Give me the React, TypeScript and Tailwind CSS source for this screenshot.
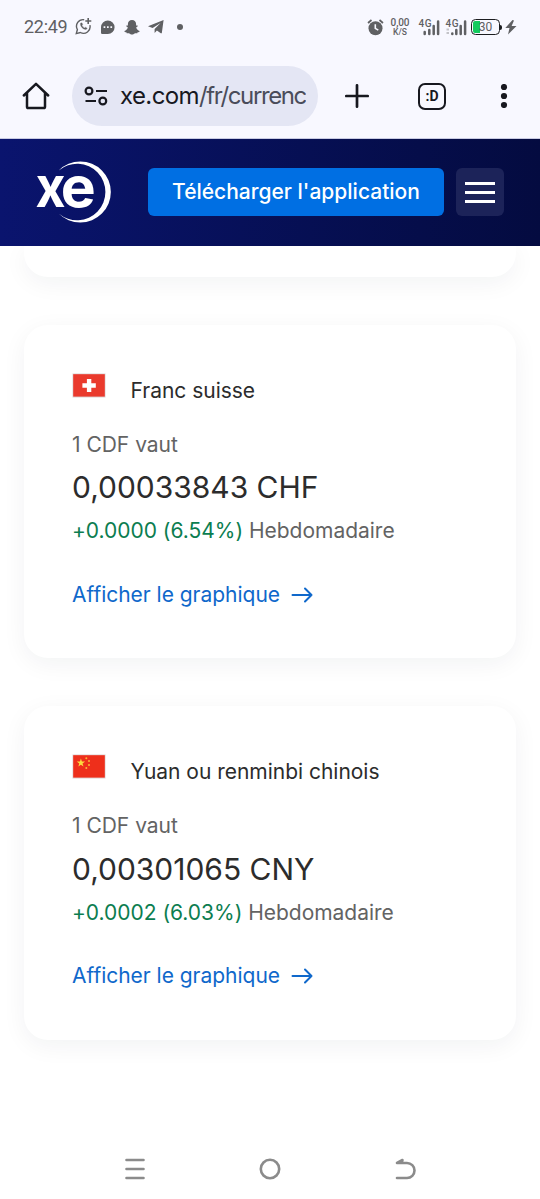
import type { ReactNode } from "react";

type CurrencyCardProps = {
  flag: ReactNode;
  name: string;
  amount: string;
  change: string;
};

function SwissFlag() {
  return (
    <svg width="34" height="25" viewBox="0 0 34 25" className="block">
      <rect x="0.5" y="0.5" width="33" height="24" fill="#d9d4d4" />
      <rect x="1.2" y="1.2" width="31.6" height="22.4" fill="#ea3a2d" />
      <path d="M14.9 6h4.4v4.3h4.5v4.4h-4.5V19h-4.4v-4.3h-4.5v-4.4h4.5z" fill="#fff" />
    </svg>
  );
}

function ChinaFlag() {
  return (
    <svg width="34" height="25" viewBox="0 0 34 25" className="block">
      <rect x="0.5" y="0.5" width="33" height="24" fill="#dccfcf" />
      <rect x="1.2" y="1.2" width="31.6" height="22.4" fill="#ee2f1b" />
      <path
        d="M8.9 4.6l1 3 3.2 0-2.6 1.9 1 3.1-2.6-1.9-2.6 1.9 1-3.1-2.6-1.9 3.2 0z"
        fill="#fddc3f"
      />
      <g fill="#f9b536">
        <circle cx="14.3" cy="4.3" r="1" />
        <circle cx="17" cy="7" r="1" />
        <circle cx="17" cy="11" r="1" />
        <circle cx="14.3" cy="14" r="1" />
      </g>
    </svg>
  );
}

function StatusBar() {
  return (
    <div className="flex h-[54px] items-center bg-[#f8f8ff] pl-6 font-[Roboto,sans-serif] text-[#5f6063]">
      <span className="w-[51px] text-[18px] leading-[54px] tracking-[-0.300px]">22:49</span>
      <svg width="17" height="17" viewBox="0 0 17 17" fill="none" stroke="#5f6063" className="mb-0.5">
        <path d="M9.2 1.7A6.6 6.6 0 0 0 2.4 11.5L1.3 15.6l4-1.1A6.6 6.6 0 0 0 14.9 7.2" strokeWidth="1.4" />
        <path d="M13.2 0v6M10.3 3h6" strokeWidth="1.6" />
        <path d="M5.5 5.2c-.6 2.9 2.7 6.5 5.7 6.2l1-1.2-1.8-1-.9.7C8.300 9.400 7.500 8.600 7 7.400l.7-.9-.8-1.700z" fill="#5f6063" strokeWidth="0.3" />
      </svg>
      <svg width="14" height="15" viewBox="0 0 14 15" className="ml-[9px]">
        <path d="M0 7.200a6.800 6.800 0 1 1 6.800 6.800H1.200A1.200 1.200 0 0 1 0 12.800z" fill="#5f6063" />
        <path d="M2.600 6.200h1.700v1.700H2.600zM6 6.200h1.700v1.700H6zM9.400 6.200h1.700v1.700H9.400z" fill="#f8f8ff" />
      </svg>
      <svg width="16" height="15" viewBox="0 0 16 15" className="ml-[9px]">
        <path
          d="M8 0c2.700 0 4.200 2 4.100 4.300v1.200c.5.200 1.300-.3 1.600.2.300.7-1.100 1.100-1.400 1.500-.3.800 1.500 3.300 3.300 3.700.5.600-.9 1.100-2 1.400l-.3 1c-.8.200-1.700-.2-2.600.1C9.800 13.800 9.200 14.600 8 14.600s-1.800-.8-2.700-1.200c-.9-.3-1.800.1-2.600-.1l-.3-1c-1.100-.3-2.500-.8-2-1.400 1.800-.4 3.600-2.900 3.300-3.700-.3-.4-1.700-.8-1.400-1.500.3-.5 1.100 0 1.600-.2V4.300C3.800 2 5.300 0 8 0z"
          fill="#5f6063"
        />
      </svg>
      <svg width="16" height="14" viewBox="0 0 16 14" className="ml-2">
        <path d="M15.600 0L0 6.200l4.600 1.900L12.600 3 6.600 9v3.900l2.300-2.500 3.900 2.900h1z" fill="#5f6063" />
      </svg>
      <span className="ml-[13px] h-[6px] w-[6px] rounded-full bg-[#5f6063]" />

      <svg width="17" height="17" viewBox="0 0 17 17" className="ml-[184px]">
        <circle cx="8.500" cy="9.200" r="7" fill="#5f6063" />
        <path d="M1 4l3.500-3M16 4l-3.500-3" stroke="#5f6063" strokeWidth="1.700" />
        <path d="M8.300 5.200v4.200l3 1.700" fill="none" stroke="#f8f8ff" strokeWidth="1.600" />
      </svg>
      <div className="ml-[6px] flex w-[20px] flex-col items-center font-medium whitespace-nowrap">
        <span className="text-[10px] leading-[10px] tracking-[-0.100px]">0,00</span>
        <span className="text-[8.500px] leading-[8px]">K/S</span>
      </div>
      <Signal className="ml-[8px]" />
      <Signal className="ml-[5px]" faint />
      <div className="relative ml-[4px] flex h-[16px] w-[29px] items-center justify-center overflow-hidden rounded-[4.500px] border-[1.500px] border-[#1c1d20]">
        <span className="absolute inset-y-[1px] left-[1px] w-[7px] rounded-l-[2px] bg-[#12ca5d]" />
        <span className="relative text-[12px] leading-[12px]">30</span>
      </div>
      <span className="h-[5px] w-[2px] rounded-r bg-[#1c1d20]" />
      <svg width="12" height="15" viewBox="0 0 12 15" className="ml-[3px]">
        <path d="M7.500 0L.3 8h4.200L3 14.600 11.500 6H6.600L9 .6z" fill="#5f6063" />
      </svg>
    </div>
  );
}

function Signal({ className, faint = false }: { className: string; faint?: boolean }) {
  return (
    <svg width="22" height="18" viewBox="0 0 22 18" className={className}>
      <text x="0.500" y="9" fontFamily="Roboto" fontSize="10" fontWeight="500" textLength="13" fill="#5f6063">
        4G
      </text>
      {faint && <path d="M1.500 11.500h2.500M1.500 15h2.500" stroke="#c3c3c8" strokeWidth="2" />}
      <path d={faint ? "M7.300 15.500v.5" : "M6.700 14v2"} stroke="#5f6063" strokeWidth="2.500" strokeLinecap="round" />
      <path d="M11.300 12v4M15.700 8v8M20.100 3.500v12.500" stroke="#5f6063" strokeWidth="2.500" strokeLinecap="round" />
    </svg>
  );
}

function BrowserBar() {
  return (
    <div className="flex h-[85px] items-center border-b border-[#c9cbe3] bg-[#f8f8ff] pl-[22px] text-[#17181f]">
      <svg width="28" height="28" viewBox="0 0 28 28" fill="none" stroke="currentColor" strokeWidth="2.500" strokeLinejoin="round" strokeLinecap="round">
        <path d="M1.800 13.500L14 1.900l12.200 11.600M5 11v13.700a1.300 1.300 0 0 0 1.300 1.300h15.400a1.300 1.300 0 0 0 1.300-1.300V11" />
      </svg>
      <div className="ml-[22px] flex h-[60px] w-[246px] items-center rounded-full bg-[#e4e6f4] pl-3">
        <svg width="24" height="20" viewBox="0 0 24 20" fill="none" stroke="currentColor" strokeWidth="2.200">
          <circle cx="5" cy="5" r="3.400" />
          <path d="M12 5h11M1.500 15h10.500" />
          <circle cx="18.800" cy="15" r="3.400" />
        </svg>
        <span className="ml-3 w-[186px] overflow-hidden font-[Inter,sans-serif] text-[24px] leading-[34px] tracking-[-0.600px] whitespace-nowrap">
          xe.com<span className="tracking-[-1.400px] text-[#4a4c5a]">/fr/currenc</span>
        </span>
      </div>
      <svg width="24" height="24" viewBox="0 0 24 24" className="ml-[27px]" stroke="currentColor" strokeWidth="2.700" strokeLinecap="round">
        <path d="M12 1.300v21.400M1.300 12h21.400" />
      </svg>
      <div className="ml-[49px] flex h-[27px] w-[28px] items-center justify-center rounded-[7px] border-[2.500px] border-[#17181f] font-[Roboto,sans-serif] text-[14px] font-bold">
        :D
      </div>
      <svg width="8" height="24" viewBox="0 0 8 24" className="ml-[54px]" fill="currentColor">
        <circle cx="4" cy="3" r="3.100" />
        <circle cx="4" cy="12" r="3.100" />
        <circle cx="4" cy="21" r="3.100" />
      </svg>
    </div>
  );
}

function SiteHeader() {
  return (
    <header className="flex h-[107px] items-center bg-linear-to-r from-[#0a146e] to-[#040b40] pb-px pl-9">
      <svg width="76" height="62" viewBox="0 0 76 62" fill="#fff" className="overflow-visible">
        <g fontFamily="Inter" fontSize="56" fontWeight="700">
          <text x="-0.500" y="46" textLength="30" lengthAdjust="spacingAndGlyphs">
            x
          </text>
          <text x="24.800" y="46" textLength="35" lengthAdjust="spacingAndGlyphs">
            e
          </text>
        </g>
        <path d="M22.700 9.500A30.500 30.500 0 1 1 22.700 52.500A28.300 28.300 0 1 0 22.700 9.500z" />
      </svg>
      <button className="ml-9 h-12 w-[296px] rounded-[6px] bg-[#006fe3] font-[Inter,sans-serif] text-[21px] font-medium whitespace-nowrap text-white">
        Télécharger l'application
      </button>
      <button className="ml-3 flex h-12 w-12 flex-col items-center justify-center gap-[6px] rounded-[6px] bg-[#1c2359]">
        <span className="h-[3px] w-[30px] bg-white" />
        <span className="h-[3px] w-[30px] bg-white" />
        <span className="h-[3px] w-[30px] bg-white" />
      </button>
    </header>
  );
}

function CurrencyCard({ flag, name, amount, change }: CurrencyCardProps) {
  return (
    <article className="h-[333.500px] rounded-3xl bg-white px-12 pt-12 text-[21px] leading-6 tracking-[-0.020px] whitespace-nowrap text-[#636363] shadow-[0_6px_24px_rgba(20,30,55,0.055)]">
      <div className="flex h-9 items-start text-[#2c2c2c]">
        <span className="w-[58.500px]">{flag}</span>
        <h2 className="leading-9">{name}</h2>
      </div>
      <p className="mt-6">1 CDF vaut</p>
      <p className="mt-[12.500px] text-[30px] leading-9 text-[#2c2c2c]">{amount}</p>
      <p className="mt-[14px]">
        <span className="text-[#0b7d50]">{change}</span> Hebdomadaire
      </p>
      <a className="mt-[39.500px] flex items-center text-[#0f68cb]">
        Afficher le graphique
        <svg width="22" height="18" viewBox="0 0 22 18" className="ml-[10.500px]" fill="none" stroke="currentColor" strokeWidth="2" strokeLinecap="round" strokeLinejoin="round">
          <path d="M1.500 9h19M14 2.500L20.500 9l-6.500 6.500" />
        </svg>
      </a>
    </article>
  );
}

function NavigationBar() {
  return (
    <nav className="flex h-[60px] items-center bg-white pl-[125px]">
      <svg width="20" height="22" viewBox="0 0 20 22" stroke="#8b8b8b" strokeWidth="2.600" strokeLinecap="round">
        <path d="M1.500 2h17M1.500 11h17M1.500 20h17" />
      </svg>
      <svg width="22" height="22" viewBox="0 0 22 22" className="ml-[114px]" fill="none" stroke="#8b8b8b" strokeWidth="2.600">
        <circle cx="11" cy="11" r="9.200" />
      </svg>
      <svg width="21" height="22" viewBox="0 0 21 22" className="ml-[114px]" fill="none" stroke="#8b8b8b" strokeWidth="2.600" strokeLinecap="round" strokeLinejoin="round">
        <path d="M2 20h10a7.500 7.500 0 0 0 0-15H2l5.500-3-.7 2.500" />
      </svg>
    </nav>
  );
}

export default function App() {
  return (
    <div className="flex h-[1199px] w-[540px] flex-col overflow-hidden bg-white">
      <StatusBar />
      <BrowserBar />
      <SiteHeader />
      <main className="flex flex-1 flex-col overflow-hidden px-6 font-[Inter,sans-serif]">
        <div className="h-[31px] shrink-0 rounded-b-3xl bg-white shadow-[0_6px_24px_rgba(20,30,55,0.055)]" />
        <div className="mt-[47.500px] flex flex-col gap-12">
          <CurrencyCard flag={<SwissFlag />} name="Franc suisse" amount="0,00033843 CHF" change="+0.0000 (6.54%)" />
          <CurrencyCard flag={<ChinaFlag />} name="Yuan ou renminbi chinois" amount="0,00301065 CNY" change="+0.0002 (6.03%)" />
        </div>
      </main>
      <NavigationBar />
    </div>
  );
}
